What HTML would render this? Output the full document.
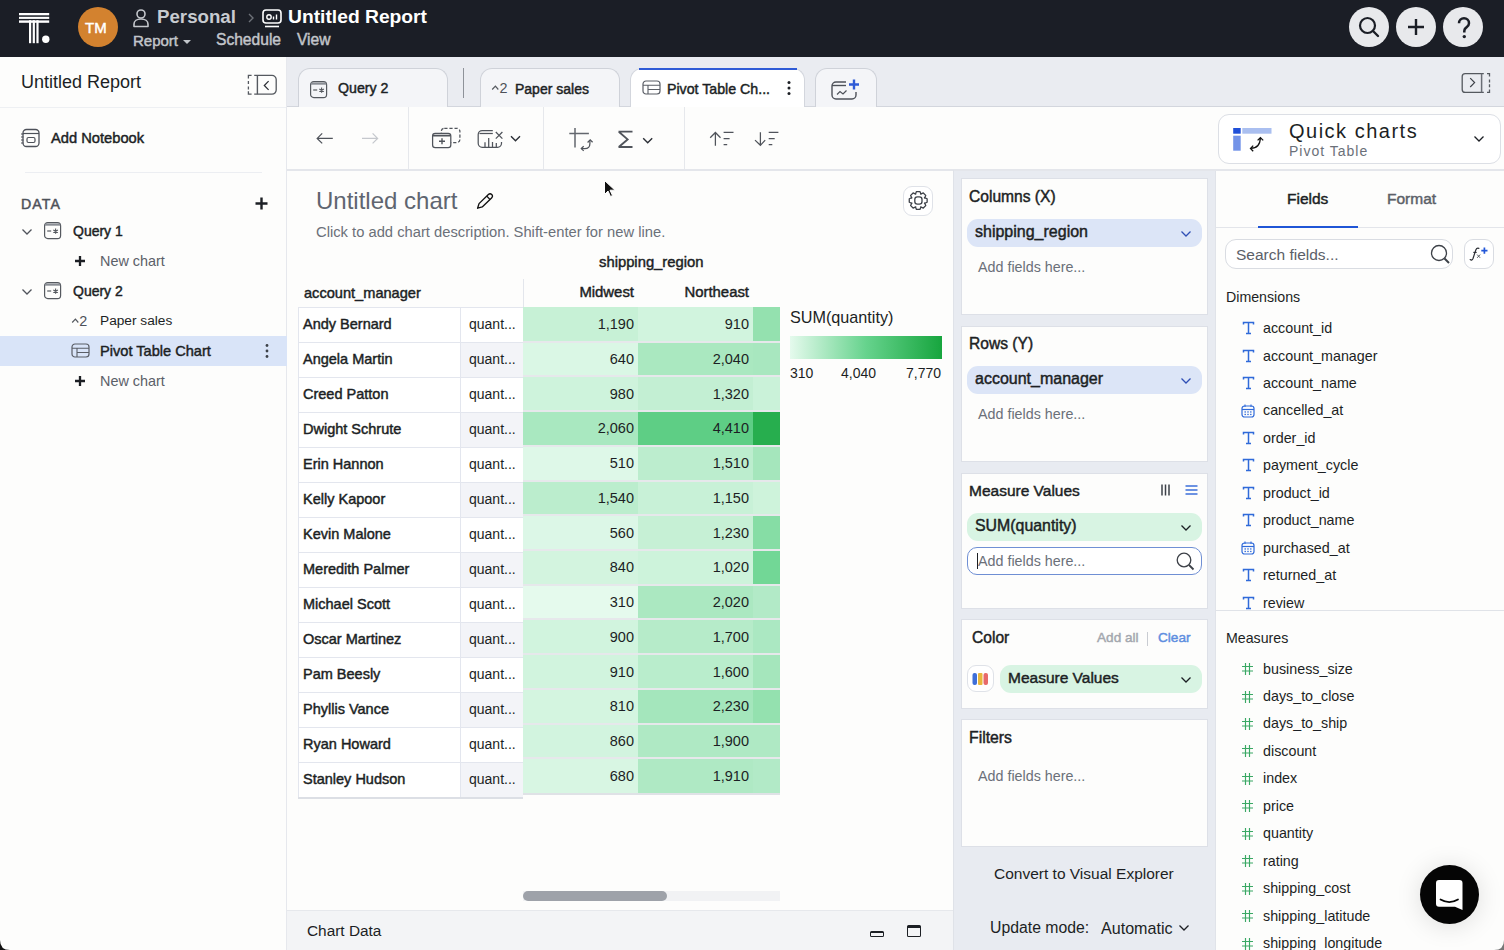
<!DOCTYPE html><html><head><meta charset="utf-8"><style>
*{box-sizing:border-box;margin:0;padding:0}
html,body{width:1504px;height:950px;overflow:hidden;background:#fdfdfc;font-family:"Liberation Sans",sans-serif}
.a{position:absolute}
.t{position:absolute;line-height:1;white-space:nowrap}
</style></head><body>
<div class="a" style="left:0px;top:0px;width:1504px;height:57px;background:#1b1e26"></div>
<svg class="a" style="left:17px;top:11px;" width="38" height="36" viewBox="0 0 38 36" fill="none"><g fill="#fff"><rect x="2" y="2" width="30.2" height="2.3"/><rect x="2" y="5.8" width="30.2" height="2.1"/><rect x="2" y="9.4" width="30.2" height="2.4"/>
<rect x="12" y="9.2" width="2.2" height="23"/><rect x="15.7" y="9.2" width="2.2" height="23"/><rect x="19.4" y="9.2" width="2.2" height="23"/><circle cx="28.8" cy="28.2" r="3.7"/></g></svg>
<div class="a" style="left:78px;top:7px;width:40px;height:40px;background:#d3822f;border-radius:50%"></div>
<div class="t " style="left:85px;top:20.10px;font-size:15px;font-weight:400;color:#fff;-webkit-text-stroke:0.45px #fff;">TM</div>
<svg class="a" style="left:132px;top:8px;" width="20" height="20" viewBox="0 0 20 20" fill="none"><circle cx="9" cy="6" r="4" stroke="#c4c7cc" stroke-width="1.6"/><path d="M2 18.5v-2.5c0-3 3-5 7-5s7 2 7 5v2.5z" stroke="#c4c7cc" stroke-width="1.6" stroke-linejoin="round"/></svg>
<div class="t " style="left:157px;top:7.57px;font-size:18.7px;font-weight:700;color:#c8cbd0;">Personal</div>
<svg class="a" style="left:246px;top:12px;" width="10" height="12" viewBox="0 0 10 12" fill="none"><path d="M3 2l4 4-4 4" stroke="#6d7178" stroke-width="1.4"/></svg>
<svg class="a" style="left:262px;top:9px;" width="21" height="19" viewBox="0 0 21 19" fill="none"><rect x="1" y="1" width="18" height="13" rx="3" stroke="#fff" stroke-width="1.6"/><circle cx="7" cy="8" r="2.2" stroke="#fff" stroke-width="1.4"/><path d="M11.5 10.5v-3M14.5 10.5v-5" stroke="#fff" stroke-width="1.4"/><path d="M3 17.5h14" stroke="#fff" stroke-width="1.6"/></svg>
<div class="t " style="left:288px;top:7.10px;font-size:19.25px;font-weight:700;color:#ffffff;">Untitled Report</div>
<div class="t " style="left:133px;top:32.60px;font-size:15px;font-weight:400;color:#c2c5ca;-webkit-text-stroke:0.45px #c2c5ca;">Report</div>
<svg class="a" style="left:182px;top:39px;" width="10" height="6" viewBox="0 0 10 6" fill="none"><path d="M1 1h8l-4 4z" fill="#c2c5ca"/></svg>
<div class="t " style="left:216px;top:32.49px;font-size:15.6px;font-weight:400;color:#c2c5ca;-webkit-text-stroke:0.45px #c2c5ca;">Schedule</div>
<div class="t " style="left:297px;top:32.49px;font-size:15.6px;font-weight:400;color:#c2c5ca;-webkit-text-stroke:0.45px #c2c5ca;">View</div>
<div class="a" style="left:1349px;top:7px;width:40px;height:40px;background:#e8e9ec;border-radius:50%"></div>
<div class="a" style="left:1396px;top:7px;width:40px;height:40px;background:#e8e9ec;border-radius:50%"></div>
<div class="a" style="left:1443px;top:7px;width:40px;height:40px;background:#e8e9ec;border-radius:50%"></div>
<svg class="a" style="left:1357px;top:15px;" width="24" height="24" viewBox="0 0 24 24" fill="none"><circle cx="10.5" cy="10.5" r="7.5" stroke="#1b1e26" stroke-width="2.2"/><path d="M16 16l5 5" stroke="#1b1e26" stroke-width="2.4" stroke-linecap="round"/></svg>
<svg class="a" style="left:1404px;top:15px;" width="24" height="24" viewBox="0 0 24 24" fill="none"><path d="M12 4v16M4 12h16" stroke="#1b1e26" stroke-width="2.4"/></svg>
<svg class="a" style="left:1455px;top:16px;" width="18" height="24" viewBox="0 0 18 24" fill="none"><path d="M4 7.2a5 5 0 0 1 10 0c0 2.8-2 3.6-3.3 4.8-.9.8-1.4 1.7-1.4 3.3v1.2" stroke="#1b1e26" stroke-width="2.5" fill="none"/><circle cx="9.3" cy="20.6" r="1.7" fill="#1b1e26"/></svg>
<!--SIDEBAR-->
<div class="a" style="left:0px;top:57px;width:287px;height:893px;background:#fdfdfc;border-right:1px solid #e6e8ed"></div>
<div class="a" style="left:0px;top:107px;width:286px;height:1px;background:#eef0f3"></div>
<div class="t " style="left:21px;top:72.76px;font-size:18px;font-weight:400;color:#1c1f24;">Untitled Report</div>
<svg class="a" style="left:0;top:0" width="300" height="100" viewBox="0 0 300 100" fill="none"><path d="M251.6 75.4h-3.2v3.2M248.4 81v3M248.4 86.4v3M248.4 91.2v3h3.2" stroke="#55595f" stroke-width="1.3"/><path d="M254.2 75.4H272a4.2 4.2 0 0 1 4.2 4.2v10.4a4.2 4.2 0 0 1-4.2 4.2H254.2" stroke="#55595f" stroke-width="1.3"/><path d="M257.4 75.4v18.8" stroke="#55595f" stroke-width="1.4"/><path d="M268.6 81.2l-4.3 4.3 4.3 4.3" stroke="#2a2d33" stroke-width="1.2"/></svg>
<svg class="a" style="left:20px;top:128px;" width="21" height="20" viewBox="0 0 21 20" fill="none"><rect x="3" y="1.5" width="16" height="17" rx="3.5" stroke="#4d5159" stroke-width="1.3"/><path d="M3 5.5h16" stroke="#4d5159" stroke-width="1.2"/><rect x="7" y="9.5" width="8" height="5" rx="1.5" stroke="#4d5159" stroke-width="1.2"/><path d="M1 6h2.5M1 9h2.5M1 12h2.5M1 15h2.5" stroke="#4d5159" stroke-width="1"/></svg>
<div class="t " style="left:51px;top:131.16px;font-size:14.7px;font-weight:400;color:#1c1f24;-webkit-text-stroke:0.45px #1c1f24;">Add Notebook</div>
<div class="a" style="left:25px;top:172px;width:237px;height:1px;background:#eceef2"></div>
<div class="t " style="left:21px;top:196.98px;font-size:14.2px;font-weight:400;color:#4d5159;-webkit-text-stroke:0.45px #4d5159;letter-spacing:1.1px">DATA</div>
<svg class="a" style="left:254px;top:196px;" width="15" height="15" viewBox="0 0 15 15" fill="none"><path d="M7.5 1.5v12M1.5 7.5h12" stroke="#1c1f24" stroke-width="2.4"/></svg>
<svg class="a" style="left:21px;top:228px;" width="12" height="8" viewBox="0 0 12 8" fill="none"><path d="M1.5 1.5l4.5 4.5 4.5-4.5" stroke="#50545c" stroke-width="1.3"/></svg>
<svg class="a" style="left:43px;top:221px;" width="19" height="19" viewBox="0 0 19 19" fill="none"><rect x="1.6" y="1.6" width="16" height="16" rx="3.2" stroke="#55595f" stroke-width="1.2"/><path d="M2 3.6h15.2" stroke="#8a8e95" stroke-width="2.2"/><path d="M4.2 10h4" stroke="#55595f" stroke-width="1.2"/><path d="M12.6 7.6v5.2M10.3 8.9l4.6 2.6M10.3 11.5l4.6-2.6" stroke="#55595f" stroke-width="1.1"/></svg>
<div class="t " style="left:73px;top:224.15px;font-size:14px;font-weight:400;color:#1c1f24;-webkit-text-stroke:0.45px #1c1f24;">Query 1</div>
<svg class="a" style="left:74px;top:255px;" width="12" height="12" viewBox="0 0 12 12" fill="none"><path d="M6 1v10M1 6h10" stroke="#1c1f24" stroke-width="2.3"/></svg>
<div class="t " style="left:100px;top:253.81px;font-size:14.4px;font-weight:400;color:#5b6068;">New chart</div>
<svg class="a" style="left:21px;top:288px;" width="12" height="8" viewBox="0 0 12 8" fill="none"><path d="M1.5 1.5l4.5 4.5 4.5-4.5" stroke="#50545c" stroke-width="1.3"/></svg>
<svg class="a" style="left:43px;top:281px;" width="19" height="19" viewBox="0 0 19 19" fill="none"><rect x="1.6" y="1.6" width="16" height="16" rx="3.2" stroke="#55595f" stroke-width="1.2"/><path d="M2 3.6h15.2" stroke="#8a8e95" stroke-width="2.2"/><path d="M4.2 10h4" stroke="#55595f" stroke-width="1.2"/><path d="M12.6 7.6v5.2M10.3 8.9l4.6 2.6M10.3 11.5l4.6-2.6" stroke="#55595f" stroke-width="1.1"/></svg>
<div class="t " style="left:73px;top:284.15px;font-size:14px;font-weight:400;color:#1c1f24;-webkit-text-stroke:0.45px #1c1f24;">Query 2</div>
<svg class="a" style="left:70px;top:316px;" width="10" height="10" viewBox="0 0 10 10" fill="none"><path d="M2.2 6.5L5.4 3.2 8.3 6.5" stroke="#55595f" stroke-width="1.2"/></svg>
<div class="t " style="left:79.2px;top:314.11px;font-size:14.4px;font-weight:400;color:#4d5159;">2</div>
<div class="t " style="left:100px;top:314.40px;font-size:13.7px;font-weight:400;color:#1c1f24;">Paper sales</div>
<div class="a" style="left:0px;top:336px;width:287px;height:30px;background:#d9e4f8"></div>
<svg class="a" style="left:71px;top:343px;" width="19" height="15" viewBox="0 0 19 15" fill="none"><rect x="1" y="1" width="17" height="13" rx="3" stroke="#5a5e66" stroke-width="1.2"/><path d="M1 5.3h17M6 5.3v8.7M6 9.5h12" stroke="#5a5e66" stroke-width="1.1"/></svg>
<div class="t " style="left:100px;top:343.64px;font-size:14.6px;font-weight:400;color:#1c1f24;-webkit-text-stroke:0.45px #1c1f24;">Pivot Table Chart</div>
<svg class="a" style="left:264px;top:343px;" width="6" height="16" viewBox="0 0 6 16" fill="none"><circle cx="3" cy="2.5" r="1.4" fill="#3d4148"/><circle cx="3" cy="8" r="1.4" fill="#3d4148"/><circle cx="3" cy="13.5" r="1.4" fill="#3d4148"/></svg>
<svg class="a" style="left:74px;top:375px;" width="12" height="12" viewBox="0 0 12 12" fill="none"><path d="M6 1v10M1 6h10" stroke="#1c1f24" stroke-width="2.3"/></svg>
<div class="t " style="left:100px;top:373.81px;font-size:14.4px;font-weight:400;color:#5b6068;">New chart</div>
<svg class="a" style="left:0px;top:940px;" width="10" height="10" viewBox="0 0 10 10" fill="none"><path d="M0 0 Q0 10 10 10 L0 10z" fill="#111"/></svg>
<!--TABS-->
<div class="a" style="left:287px;top:57px;width:1217px;height:50px;background:#eaecf1"></div>
<div class="a" style="left:287px;top:106px;width:1217px;height:1px;background:#d3d6dd"></div>
<div class="a" style="left:298px;top:68px;width:150px;height:39px;background:#f4f5f8;border:1px solid #cfd2d9;border-bottom:none;border-radius:12px 12px 0 0"></div>
<svg class="a" style="left:309px;top:80px;" width="19" height="19" viewBox="0 0 19 19" fill="none"><rect x="1.6" y="1.6" width="16" height="16" rx="3.2" stroke="#55595f" stroke-width="1.2"/><path d="M2 3.6h15.2" stroke="#8a8e95" stroke-width="2.2"/><path d="M4.2 10h4" stroke="#55595f" stroke-width="1.2"/><path d="M12.6 7.6v5.2M10.3 8.9l4.6 2.6M10.3 11.5l4.6-2.6" stroke="#55595f" stroke-width="1.1"/></svg>
<div class="t " style="left:338px;top:81.48px;font-size:14.2px;font-weight:400;color:#1c1f24;-webkit-text-stroke:0.45px #1c1f24;">Query 2</div>
<div class="a" style="left:463px;top:68px;width:1px;height:30px;background:#8e9299"></div>
<div class="a" style="left:480px;top:68px;width:140px;height:39px;background:#f4f5f8;border:1px solid #cfd2d9;border-bottom:none;border-radius:12px 12px 0 0"></div>
<svg class="a" style="left:490px;top:83px;" width="10" height="10" viewBox="0 0 10 10" fill="none"><path d="M2.2 6.5L5.4 3.2 8.3 6.5" stroke="#55595f" stroke-width="1.2"/></svg>
<div class="t " style="left:499.4px;top:81.31px;font-size:14.4px;font-weight:400;color:#4d5159;">2</div>
<div class="t " style="left:515px;top:81.65px;font-size:14px;font-weight:400;color:#1c1f24;-webkit-text-stroke:0.45px #1c1f24;">Paper sales</div>
<div class="a" style="left:630px;top:68px;width:175px;height:40px;background:#fff;border:1px solid #d3d6dd;border-bottom:none;border-radius:12px 12px 0 0"></div>
<div class="a" style="left:639px;top:68px;width:158px;height:2px;background:#2f5bd6"></div>
<svg class="a" style="left:642px;top:80px;" width="19" height="15" viewBox="0 0 19 15" fill="none"><rect x="1" y="1" width="17" height="13" rx="3" stroke="#5a5e66" stroke-width="1.2"/><path d="M1 5.3h17M6 5.3v8.7M6 9.5h12" stroke="#5a5e66" stroke-width="1.1"/></svg>
<div class="t " style="left:667px;top:81.58px;font-size:14.2px;font-weight:400;color:#1c1f24;-webkit-text-stroke:0.45px #1c1f24;">Pivot Table Ch...</div>
<svg class="a" style="left:786px;top:80px;" width="6" height="16" viewBox="0 0 6 16" fill="none"><circle cx="3" cy="2.5" r="1.5" fill="#1c1f24"/><circle cx="3" cy="8" r="1.5" fill="#1c1f24"/><circle cx="3" cy="13.5" r="1.5" fill="#1c1f24"/></svg>
<div class="a" style="left:815px;top:68px;width:62px;height:39px;background:#f4f5f8;border:1px solid #cfd2d9;border-bottom:none;border-radius:12px 12px 0 0"></div>
<svg class="a" style="left:830px;top:78px;" width="32" height="22" viewBox="0 0 32 22" fill="none"><path d="M16 4H6a4 4 0 0 0-4 4v9a4 4 0 0 0 4 4h16a4 4 0 0 0 4-4v-3" stroke="#4d5159" stroke-width="1.4"/><path d="M2 7.5h14" stroke="#4d5159" stroke-width="1.4"/><path d="M7 16.5l3-3 3 2.5 3.5-3.5" stroke="#4d5159" stroke-width="1.2"/><path d="M24 1.5v10M19 6.5h10" stroke="#2f5bd6" stroke-width="2.4"/></svg>
<svg class="a" style="left:1440px;top:60px" width="64" height="45" viewBox="1440 60 64 45" fill="none"><path d="M1483.8 73.6H1465.2a3 3 0 0 0-3 3v12.8a3 3 0 0 0 3 3h18.6" stroke="#55595f" stroke-width="1.3"/><path d="M1481.6 73.6v18.8" stroke="#6a6e75" stroke-width="1.5"/><path d="M1487 73.6h2.5v2.8M1489.5 79.6v3M1489.5 84.2v3M1489.5 89.4v3h-2.5" stroke="#55595f" stroke-width="1.3"/><path d="M1470.2 78.2l4.4 4.4-4.4 4.4" stroke="#3d4148" stroke-width="1.2"/></svg>
<div class="a" style="left:287px;top:107px;width:1217px;height:62px;background:#fdfdfc"></div>
<div class="a" style="left:287px;top:169px;width:1217px;height:1.5px;background:#e4e6eb"></div>
<div class="a" style="left:408px;top:107px;width:1px;height:62px;background:#e6e8ec"></div>
<div class="a" style="left:543px;top:107px;width:1px;height:62px;background:#e6e8ec"></div>
<div class="a" style="left:684px;top:107px;width:1px;height:62px;background:#e6e8ec"></div>
<svg class="a" style="left:0;top:0" width="1504" height="170" viewBox="0 0 1504 170" fill="none">
<path d="M332.8 138.4H317.2M322.2 133.4l-5 5 5 5" stroke="#50545b" stroke-width="1.25"/>
<path d="M362 138.4h15.6M372.6 133.4l5 5-5 5" stroke="#c5c8cd" stroke-width="1.25"/>
<rect x="441.3" y="128.3" width="18.6" height="14.3" rx="3" stroke="#50545b" stroke-width="1.25" stroke-dasharray="3.2 1.9"/>
<rect x="432.6" y="133.3" width="18.2" height="14.3" rx="2.6" fill="#fdfdfc" stroke="#50545b" stroke-width="1.25"/>
<path d="M433 135.6h17.4" stroke="#50545b" stroke-width="1.8"/>
<path d="M442 138.2v6M439 141.2h6" stroke="#50545b" stroke-width="1.4"/>
<path d="M492.8 130.6H482.2a4 4 0 0 0-4 4v8.7a4 4 0 0 0 4 4H497.5a4 4 0 0 0 4-4V142" stroke="#50545b" stroke-width="1.25"/>
<path d="M479.5 133.5H492.8" stroke="#50545b" stroke-width="1.25"/>
<path d="M485 147V142.3M488.7 147V138M492.5 147V142M496.3 147V143" stroke="#50545b" stroke-width="1.25"/>
<path d="M495.8 132l6.6 6.6M502.4 132l-6.6 6.6" stroke="#50545b" stroke-width="1.25"/>
<path d="M511 136.2l4.5 4.5 4.5-4.5" stroke="#2b2f36" stroke-width="1.4"/>
<path d="M575 128v19.6M569.3 133.5h19.6" stroke="#63676e" stroke-width="1.5"/>
<path d="M581.5 148.6h3.2q5.2 0 5.2-5.2V140" stroke="#50545b" stroke-width="1.25"/>
<path d="M587.6 142.5l2.6-2.6 2.4 2.4M583.7 146.2l-2.4 2.4 2.4 2.3" stroke="#50545b" stroke-width="1.25"/>
<path d="M618.5 131.6h14M618.8 131.8l8.8 7.6-8.8 7.6M618.5 147h14" stroke="#50545b" stroke-width="1.9"/>
<path d="M643.2 138.3l4.5 4.5 4.5-4.5" stroke="#2b2f36" stroke-width="1.4"/>
<path d="M715.4 145.7V132.5M710.2 137.7l5.2-5.2 5.1 5.2M723.6 132.4h9.9M723.6 138.6h6M723.6 144.7h3.6" stroke="#50545b" stroke-width="1.25"/>
<path d="M760.4 132.3V145.5M755 140.1l5.4 5.2 4.8-5.2M768.7 132.4h9.7M768.7 138.6h6M768.7 144.7h3.6" stroke="#50545b" stroke-width="1.25"/>
</svg>
<!--QUICK-->
<div class="a" style="left:1218px;top:114px;width:283px;height:50px;background:#fff;border:1px solid #dcdfe5;border-radius:11px"></div>
<svg class="a" style="left:1225px;top:118px;" width="60" height="42" viewBox="0 0 60 42" fill="none"><rect x="8.2" y="10" width="7.5" height="5.7" fill="#1f4fd8"/><rect x="17.3" y="10" width="29.2" height="5.7" fill="#aabff0"/><rect x="8.2" y="17.7" width="7.5" height="15" fill="#7393e8"/><path d="M25.6 30.4Q35 30.5 35.4 19.8M32.6 22.4L35.4 19.6L38.2 22.4M28.2 27.6L25.5 30.4L28.2 33.2" stroke="#111" stroke-width="1.3" fill="none"/></svg>
<div class="t " style="left:1289px;top:120.57px;font-size:20px;font-weight:400;color:#1c1f24;letter-spacing:1.5px">Quick charts</div>
<div class="t " style="left:1289px;top:143.65px;font-size:14px;font-weight:400;color:#6b7079;letter-spacing:1px">Pivot Table</div>
<svg class="a" style="left:1473px;top:135px;" width="12" height="8" viewBox="0 0 12 8" fill="none"><path d="M1.5 1.5l4.5 4.5 4.5-4.5" stroke="#1c1f24" stroke-width="1.3"/></svg>
<div class="a" style="left:287px;top:170.5px;width:667px;height:740px;background:#fdfdfc"></div>
<div class="a" style="left:953px;top:170px;width:1px;height:780px;background:#dfe2e8"></div>
<div class="t " style="left:316px;top:189.08px;font-size:24px;font-weight:400;color:#5f6570;">Untitled chart</div>
<svg class="a" style="left:470px;top:188px" width="30" height="26" viewBox="470 188 30 26" fill="none"><g transform="translate(477.6 208.2) rotate(-44)"><path d="M0 0L4.2-2.3H17.2Q19.6-2.3 19.6 0Q19.6 2.3 17.2 2.3H4.2Z" stroke="#111" stroke-width="1.35" stroke-linejoin="round"/><path d="M15 -2.3V2.3" stroke="#111" stroke-width="1.3"/></g></svg>
<div class="t " style="left:316px;top:224.81px;font-size:14.75px;font-weight:400;color:#6b7079;">Click to add chart description. Shift-enter for new line.</div>
<div class="a" style="left:903px;top:186px;width:30px;height:30px;background:#fff;border:1px solid #dfe2e8;border-radius:9px"></div>
<svg class="a" style="left:890px;top:180px" width="50" height="40" viewBox="890 180 50 40" fill="none"><path d="M915.39 194.20 L916.46 191.57 L919.94 191.57 L921.01 194.20 L920.67 194.06 L923.29 192.96 L925.74 195.41 L924.64 198.03 L924.50 197.69 L927.13 198.76 L927.13 202.24 L924.50 203.31 L924.64 202.97 L925.74 205.59 L923.29 208.04 L920.67 206.94 L921.01 206.80 L919.94 209.43 L916.46 209.43 L915.39 206.80 L915.73 206.94 L913.11 208.04 L910.66 205.59 L911.76 202.97 L911.90 203.31 L909.27 202.24 L909.27 198.76 L911.90 197.69 L911.76 198.03 L910.66 195.41 L913.11 192.96 L915.73 194.06Z" stroke="#3d4148" stroke-width="1.3" stroke-linejoin="round"/><rect x="914.8" y="196.9" width="7.2" height="7.2" rx="2.6" stroke="#3d4148" stroke-width="1.3"/></svg>
<svg class="a" style="left:603px;top:179px;" width="14" height="20" viewBox="0 0 14 20" fill="none"><path d="M1.5 1.5v14l3.5-3.5 2.5 5.5 2-1-2.5-5.3h5z" fill="#111" stroke="#fff" stroke-width="1"/></svg>
<div class="t " style="left:599px;top:255.47px;font-size:14.8px;font-weight:400;color:#1c1f24;-webkit-text-stroke:0.45px #1c1f24;">shipping_region</div>
<div class="t " style="left:304px;top:285.64px;font-size:14.6px;font-weight:400;color:#1c1f24;-webkit-text-stroke:0.45px #1c1f24;">account_manager</div>
<div class="a" style="left:523px;top:279px;width:1px;height:28px;background:#e3e6ec"></div>
<div class="t " style="right:870px;top:285.39px;font-size:14.9px;font-weight:400;color:#1c1f24;-webkit-text-stroke:0.45px #1c1f24;">Midwest</div>
<div class="t " style="right:755px;top:285.39px;font-size:14.9px;font-weight:400;color:#1c1f24;-webkit-text-stroke:0.45px #1c1f24;">Northeast</div>
<!--TABLE-->
<div class="a" style="left:298px;top:307px;width:225px;height:491px;background:#fff;border-left:1px solid #e3e6ee"></div>
<div class="a" style="left:523px;top:307.0px;width:115px;height:34.72px;background:#c7f1d6"></div>
<div class="a" style="left:638px;top:307.0px;width:115px;height:34.72px;background:#d1f4de"></div>
<div class="a" style="left:753px;top:307.0px;width:27px;height:34.72px;background:#94e1af"></div>
<div class="a" style="left:298px;top:307px;width:225px;height:1px;background:#e3e6ee"></div>
<div class="t " style="left:303px;top:316.73px;font-size:14.5px;font-weight:400;color:#1c1f24;-webkit-text-stroke:0.45px #1c1f24;">Andy Bernard</div>
<div class="t " style="left:469px;top:316.55px;font-size:14px;font-weight:400;color:#1c1f24;">quant...</div>
<div class="t " style="right:870px;top:317.33px;font-size:14.5px;font-weight:400;color:#1c1f24;">1,190</div>
<div class="t " style="right:755px;top:317.33px;font-size:14.5px;font-weight:400;color:#1c1f24;">910</div>
<div class="a" style="left:461px;top:342px;width:62px;height:35px;background:#f3f4f8"></div>
<div class="a" style="left:523px;top:341.72px;width:115px;height:34.72px;background:#daf7e5"></div>
<div class="a" style="left:638px;top:341.72px;width:115px;height:34.72px;background:#aae8c0"></div>
<div class="a" style="left:753px;top:341.72px;width:27px;height:34.72px;background:#a8e7bf"></div>
<div class="a" style="left:298px;top:342px;width:225px;height:1px;background:#e3e6ee"></div>
<div class="a" style="left:523px;top:340.72px;width:257px;height:2px;background:#e6e8eb"></div>
<div class="t " style="left:303px;top:351.73px;font-size:14.5px;font-weight:400;color:#1c1f24;-webkit-text-stroke:0.45px #1c1f24;">Angela Martin</div>
<div class="t " style="left:469px;top:351.55px;font-size:14px;font-weight:400;color:#1c1f24;">quant...</div>
<div class="t " style="right:870px;top:352.05px;font-size:14.5px;font-weight:400;color:#1c1f24;">640</div>
<div class="t " style="right:755px;top:352.05px;font-size:14.5px;font-weight:400;color:#1c1f24;">2,040</div>
<div class="a" style="left:523px;top:376.44px;width:115px;height:34.72px;background:#cef3dc"></div>
<div class="a" style="left:638px;top:376.44px;width:115px;height:34.72px;background:#c3efd3"></div>
<div class="a" style="left:753px;top:376.44px;width:27px;height:34.72px;background:#caf2d9"></div>
<div class="a" style="left:298px;top:377px;width:225px;height:1px;background:#e3e6ee"></div>
<div class="a" style="left:523px;top:375.44px;width:257px;height:2px;background:#e6e8eb"></div>
<div class="t " style="left:303px;top:386.73px;font-size:14.5px;font-weight:400;color:#1c1f24;-webkit-text-stroke:0.45px #1c1f24;">Creed Patton</div>
<div class="t " style="left:469px;top:386.55px;font-size:14px;font-weight:400;color:#1c1f24;">quant...</div>
<div class="t " style="right:870px;top:386.77px;font-size:14.5px;font-weight:400;color:#1c1f24;">980</div>
<div class="t " style="right:755px;top:386.77px;font-size:14.5px;font-weight:400;color:#1c1f24;">1,320</div>
<div class="a" style="left:461px;top:412px;width:62px;height:35px;background:#f3f4f8"></div>
<div class="a" style="left:523px;top:411.16px;width:115px;height:34.72px;background:#a9e8c0"></div>
<div class="a" style="left:638px;top:411.16px;width:115px;height:34.72px;background:#5ece85"></div>
<div class="a" style="left:753px;top:411.16px;width:27px;height:34.72px;background:#27ae4e"></div>
<div class="a" style="left:298px;top:412px;width:225px;height:1px;background:#e3e6ee"></div>
<div class="a" style="left:523px;top:410.16px;width:257px;height:2px;background:#e6e8eb"></div>
<div class="t " style="left:303px;top:421.73px;font-size:14.5px;font-weight:400;color:#1c1f24;-webkit-text-stroke:0.45px #1c1f24;">Dwight Schrute</div>
<div class="t " style="left:469px;top:421.55px;font-size:14px;font-weight:400;color:#1c1f24;">quant...</div>
<div class="t " style="right:870px;top:421.49px;font-size:14.5px;font-weight:400;color:#1c1f24;">2,060</div>
<div class="t " style="right:755px;top:421.49px;font-size:14.5px;font-weight:400;color:#1c1f24;">4,410</div>
<div class="a" style="left:523px;top:445.88px;width:115px;height:34.72px;background:#def8e8"></div>
<div class="a" style="left:638px;top:445.88px;width:115px;height:34.72px;background:#bcedce"></div>
<div class="a" style="left:753px;top:445.88px;width:27px;height:34.72px;background:#a5e6bc"></div>
<div class="a" style="left:298px;top:447px;width:225px;height:1px;background:#e3e6ee"></div>
<div class="a" style="left:523px;top:444.88px;width:257px;height:2px;background:#e6e8eb"></div>
<div class="t " style="left:303px;top:456.73px;font-size:14.5px;font-weight:400;color:#1c1f24;-webkit-text-stroke:0.45px #1c1f24;">Erin Hannon</div>
<div class="t " style="left:469px;top:456.55px;font-size:14px;font-weight:400;color:#1c1f24;">quant...</div>
<div class="t " style="right:870px;top:456.21px;font-size:14.5px;font-weight:400;color:#1c1f24;">510</div>
<div class="t " style="right:755px;top:456.21px;font-size:14.5px;font-weight:400;color:#1c1f24;">1,510</div>
<div class="a" style="left:461px;top:482px;width:62px;height:35px;background:#f3f4f8"></div>
<div class="a" style="left:523px;top:480.6px;width:115px;height:34.72px;background:#bbedcd"></div>
<div class="a" style="left:638px;top:480.6px;width:115px;height:34.72px;background:#c8f1d7"></div>
<div class="a" style="left:753px;top:480.6px;width:27px;height:34.72px;background:#cef3db"></div>
<div class="a" style="left:298px;top:482px;width:225px;height:1px;background:#e3e6ee"></div>
<div class="a" style="left:523px;top:479.6px;width:257px;height:2px;background:#e6e8eb"></div>
<div class="t " style="left:303px;top:491.73px;font-size:14.5px;font-weight:400;color:#1c1f24;-webkit-text-stroke:0.45px #1c1f24;">Kelly Kapoor</div>
<div class="t " style="left:469px;top:491.55px;font-size:14px;font-weight:400;color:#1c1f24;">quant...</div>
<div class="t " style="right:870px;top:490.93px;font-size:14.5px;font-weight:400;color:#1c1f24;">1,540</div>
<div class="t " style="right:755px;top:490.93px;font-size:14.5px;font-weight:400;color:#1c1f24;">1,150</div>
<div class="a" style="left:523px;top:515.32px;width:115px;height:34.72px;background:#dcf7e7"></div>
<div class="a" style="left:638px;top:515.32px;width:115px;height:34.72px;background:#c6f0d5"></div>
<div class="a" style="left:753px;top:515.32px;width:27px;height:34.72px;background:#86dda5"></div>
<div class="a" style="left:298px;top:517px;width:225px;height:1px;background:#e3e6ee"></div>
<div class="a" style="left:523px;top:514.32px;width:257px;height:2px;background:#e6e8eb"></div>
<div class="t " style="left:303px;top:526.73px;font-size:14.5px;font-weight:400;color:#1c1f24;-webkit-text-stroke:0.45px #1c1f24;">Kevin Malone</div>
<div class="t " style="left:469px;top:526.55px;font-size:14px;font-weight:400;color:#1c1f24;">quant...</div>
<div class="t " style="right:870px;top:525.65px;font-size:14.5px;font-weight:400;color:#1c1f24;">560</div>
<div class="t " style="right:755px;top:525.65px;font-size:14.5px;font-weight:400;color:#1c1f24;">1,230</div>
<div class="a" style="left:461px;top:552px;width:62px;height:35px;background:#f3f4f8"></div>
<div class="a" style="left:523px;top:550.04px;width:115px;height:34.72px;background:#d3f4df"></div>
<div class="a" style="left:638px;top:550.04px;width:115px;height:34.72px;background:#cdf3db"></div>
<div class="a" style="left:753px;top:550.04px;width:27px;height:34.72px;background:#72d796"></div>
<div class="a" style="left:298px;top:552px;width:225px;height:1px;background:#e3e6ee"></div>
<div class="a" style="left:523px;top:549.04px;width:257px;height:2px;background:#e6e8eb"></div>
<div class="t " style="left:303px;top:561.73px;font-size:14.5px;font-weight:400;color:#1c1f24;-webkit-text-stroke:0.45px #1c1f24;">Meredith Palmer</div>
<div class="t " style="left:469px;top:561.55px;font-size:14px;font-weight:400;color:#1c1f24;">quant...</div>
<div class="t " style="right:870px;top:560.37px;font-size:14.5px;font-weight:400;color:#1c1f24;">840</div>
<div class="t " style="right:755px;top:560.37px;font-size:14.5px;font-weight:400;color:#1c1f24;">1,020</div>
<div class="a" style="left:523px;top:584.76px;width:115px;height:34.72px;background:#e5faed"></div>
<div class="a" style="left:638px;top:584.76px;width:115px;height:34.72px;background:#abe8c1"></div>
<div class="a" style="left:753px;top:584.76px;width:27px;height:34.72px;background:#b2eac7"></div>
<div class="a" style="left:298px;top:587px;width:225px;height:1px;background:#e3e6ee"></div>
<div class="a" style="left:523px;top:583.76px;width:257px;height:2px;background:#e6e8eb"></div>
<div class="t " style="left:303px;top:596.73px;font-size:14.5px;font-weight:400;color:#1c1f24;-webkit-text-stroke:0.45px #1c1f24;">Michael Scott</div>
<div class="t " style="left:469px;top:596.55px;font-size:14px;font-weight:400;color:#1c1f24;">quant...</div>
<div class="t " style="right:870px;top:595.09px;font-size:14.5px;font-weight:400;color:#1c1f24;">310</div>
<div class="t " style="right:755px;top:595.09px;font-size:14.5px;font-weight:400;color:#1c1f24;">2,020</div>
<div class="a" style="left:461px;top:622px;width:62px;height:35px;background:#f3f4f8"></div>
<div class="a" style="left:523px;top:619.48px;width:115px;height:34.72px;background:#d1f4de"></div>
<div class="a" style="left:638px;top:619.48px;width:115px;height:34.72px;background:#b6ebc9"></div>
<div class="a" style="left:753px;top:619.48px;width:27px;height:34.72px;background:#abe8c2"></div>
<div class="a" style="left:298px;top:622px;width:225px;height:1px;background:#e3e6ee"></div>
<div class="a" style="left:523px;top:618.48px;width:257px;height:2px;background:#e6e8eb"></div>
<div class="t " style="left:303px;top:631.73px;font-size:14.5px;font-weight:400;color:#1c1f24;-webkit-text-stroke:0.45px #1c1f24;">Oscar Martinez</div>
<div class="t " style="left:469px;top:631.55px;font-size:14px;font-weight:400;color:#1c1f24;">quant...</div>
<div class="t " style="right:870px;top:629.81px;font-size:14.5px;font-weight:400;color:#1c1f24;">900</div>
<div class="t " style="right:755px;top:629.81px;font-size:14.5px;font-weight:400;color:#1c1f24;">1,700</div>
<div class="a" style="left:523px;top:654.2px;width:115px;height:34.72px;background:#d1f4de"></div>
<div class="a" style="left:638px;top:654.2px;width:115px;height:34.72px;background:#b9edcc"></div>
<div class="a" style="left:753px;top:654.2px;width:27px;height:34.72px;background:#a5e6bc"></div>
<div class="a" style="left:298px;top:657px;width:225px;height:1px;background:#e3e6ee"></div>
<div class="a" style="left:523px;top:653.2px;width:257px;height:2px;background:#e6e8eb"></div>
<div class="t " style="left:303px;top:666.73px;font-size:14.5px;font-weight:400;color:#1c1f24;-webkit-text-stroke:0.45px #1c1f24;">Pam Beesly</div>
<div class="t " style="left:469px;top:666.55px;font-size:14px;font-weight:400;color:#1c1f24;">quant...</div>
<div class="t " style="right:870px;top:664.53px;font-size:14.5px;font-weight:400;color:#1c1f24;">910</div>
<div class="t " style="right:755px;top:664.53px;font-size:14.5px;font-weight:400;color:#1c1f24;">1,600</div>
<div class="a" style="left:461px;top:692px;width:62px;height:35px;background:#f3f4f8"></div>
<div class="a" style="left:523px;top:688.92px;width:115px;height:34.72px;background:#d4f5e0"></div>
<div class="a" style="left:638px;top:688.92px;width:115px;height:34.72px;background:#a4e6bc"></div>
<div class="a" style="left:753px;top:688.92px;width:27px;height:34.72px;background:#94e1af"></div>
<div class="a" style="left:298px;top:692px;width:225px;height:1px;background:#e3e6ee"></div>
<div class="a" style="left:523px;top:687.92px;width:257px;height:2px;background:#e6e8eb"></div>
<div class="t " style="left:303px;top:701.73px;font-size:14.5px;font-weight:400;color:#1c1f24;-webkit-text-stroke:0.45px #1c1f24;">Phyllis Vance</div>
<div class="t " style="left:469px;top:701.55px;font-size:14px;font-weight:400;color:#1c1f24;">quant...</div>
<div class="t " style="right:870px;top:699.25px;font-size:14.5px;font-weight:400;color:#1c1f24;">810</div>
<div class="t " style="right:755px;top:699.25px;font-size:14.5px;font-weight:400;color:#1c1f24;">2,230</div>
<div class="a" style="left:523px;top:723.64px;width:115px;height:34.72px;background:#d2f4df"></div>
<div class="a" style="left:638px;top:723.64px;width:115px;height:34.72px;background:#afe9c4"></div>
<div class="a" style="left:753px;top:723.64px;width:27px;height:34.72px;background:#afe9c4"></div>
<div class="a" style="left:298px;top:727px;width:225px;height:1px;background:#e3e6ee"></div>
<div class="a" style="left:523px;top:722.64px;width:257px;height:2px;background:#e6e8eb"></div>
<div class="t " style="left:303px;top:736.73px;font-size:14.5px;font-weight:400;color:#1c1f24;-webkit-text-stroke:0.45px #1c1f24;">Ryan Howard</div>
<div class="t " style="left:469px;top:736.55px;font-size:14px;font-weight:400;color:#1c1f24;">quant...</div>
<div class="t " style="right:870px;top:733.97px;font-size:14.5px;font-weight:400;color:#1c1f24;">860</div>
<div class="t " style="right:755px;top:733.97px;font-size:14.5px;font-weight:400;color:#1c1f24;">1,900</div>
<div class="a" style="left:461px;top:762px;width:62px;height:35px;background:#f3f4f8"></div>
<div class="a" style="left:523px;top:758.36px;width:115px;height:34.72px;background:#d8f6e3"></div>
<div class="a" style="left:638px;top:758.36px;width:115px;height:34.72px;background:#afe9c4"></div>
<div class="a" style="left:753px;top:758.36px;width:27px;height:34.72px;background:#b2eac7"></div>
<div class="a" style="left:298px;top:762px;width:225px;height:1px;background:#e3e6ee"></div>
<div class="a" style="left:523px;top:757.36px;width:257px;height:2px;background:#e6e8eb"></div>
<div class="t " style="left:303px;top:771.73px;font-size:14.5px;font-weight:400;color:#1c1f24;-webkit-text-stroke:0.45px #1c1f24;">Stanley Hudson</div>
<div class="t " style="left:469px;top:771.55px;font-size:14px;font-weight:400;color:#1c1f24;">quant...</div>
<div class="t " style="right:870px;top:768.69px;font-size:14.5px;font-weight:400;color:#1c1f24;">680</div>
<div class="t " style="right:755px;top:768.69px;font-size:14.5px;font-weight:400;color:#1c1f24;">1,910</div>
<div class="a" style="left:460px;top:307px;width:1px;height:491px;background:#e3e6ee"></div>
<div class="a" style="left:298px;top:797px;width:225px;height:1.5px;background:#dcdfe5"></div>
<div class="a" style="left:523px;top:793px;width:257px;height:2px;background:#dfe2e6"></div>
<div class="t " style="left:790px;top:309.29px;font-size:16.2px;font-weight:400;color:#1c1f24;">SUM(quantity)</div>
<div class="a" style="left:790px;top:336px;width:152px;height:23px;background:linear-gradient(90deg,#e5faed,#66d38d,#17a53e)"></div>
<div class="t " style="left:790px;top:365.65px;font-size:14px;font-weight:400;color:#1c1f24;">310</div>
<div class="t " style="left:841px;top:365.65px;font-size:14px;font-weight:400;color:#1c1f24;">4,040</div>
<div class="t " style="right:563px;top:365.65px;font-size:14px;font-weight:400;color:#1c1f24;">7,770</div>
<div class="a" style="left:523px;top:891px;width:257px;height:10px;background:#f1f2f4"></div>
<div class="a" style="left:523px;top:891px;width:144px;height:10px;background:#9ea2a9;border-radius:5px"></div>
<div class="a" style="left:287px;top:910px;width:666px;height:40px;background:#f3f4f6;border-top:1px solid #e6e8ec"></div>
<div class="t " style="left:307px;top:922.96px;font-size:15.4px;font-weight:400;color:#1c1f24;">Chart Data</div>
<div class="a" style="left:870px;top:931px;width:14px;height:6px;border:1.6px solid #1c1f24;border-radius:1.5px;border-top-width:2.6px"></div>
<div class="a" style="left:907px;top:925px;width:14px;height:12px;border:1.5px solid #1c1f24;border-top-width:3px;border-radius:1.5px"></div>
<!--CONFIG-->
<div class="a" style="left:954px;top:170.5px;width:261px;height:780px;background:#e8ebf1"></div>
<div class="a" style="left:961px;top:178px;width:247px;height:137px;background:#fdfdfc;border:1px solid #dde0e7"></div>
<div class="a" style="left:961px;top:326px;width:247px;height:136px;background:#fdfdfc;border:1px solid #dde0e7"></div>
<div class="a" style="left:961px;top:473px;width:247px;height:136px;background:#fdfdfc;border:1px solid #dde0e7"></div>
<div class="a" style="left:961px;top:619px;width:247px;height:90px;background:#fdfdfc;border:1px solid #dde0e7"></div>
<div class="a" style="left:961px;top:719px;width:247px;height:128px;background:#fdfdfc;border:1px solid #dde0e7"></div>
<div class="t " style="left:969px;top:189.09px;font-size:15.6px;font-weight:400;color:#1c1f24;-webkit-text-stroke:0.45px #1c1f24;">Columns (X)</div>
<div class="a" style="left:967px;top:219px;width:235px;height:28px;background:#dce5f7;border-radius:11px"></div>
<div class="t " style="left:975px;top:223.86px;font-size:16px;font-weight:400;color:#1c1f24;-webkit-text-stroke:0.45px #1c1f24;">shipping_region</div>
<svg class="a" style="left:1180px;top:230px;" width="12" height="8" viewBox="0 0 12 8" fill="none"><path d="M1.5 1.5l4.5 4.5 4.5-4.5" stroke="#2f4fb5" stroke-width="1.3"/></svg>
<div class="t " style="left:978px;top:259.60px;font-size:14.3px;font-weight:400;color:#6b7079;">Add fields here...</div>
<div class="t " style="left:969px;top:336.29px;font-size:15.6px;font-weight:400;color:#1c1f24;-webkit-text-stroke:0.45px #1c1f24;">Rows (Y)</div>
<div class="a" style="left:967px;top:366px;width:235px;height:28px;background:#dce5f7;border-radius:11px"></div>
<div class="t " style="left:975px;top:370.86px;font-size:16px;font-weight:400;color:#1c1f24;-webkit-text-stroke:0.45px #1c1f24;">account_manager</div>
<svg class="a" style="left:1180px;top:377px;" width="12" height="8" viewBox="0 0 12 8" fill="none"><path d="M1.5 1.5l4.5 4.5 4.5-4.5" stroke="#2f4fb5" stroke-width="1.3"/></svg>
<div class="t " style="left:978px;top:406.90px;font-size:14.3px;font-weight:400;color:#6b7079;">Add fields here...</div>
<div class="t " style="left:969px;top:482.88px;font-size:15.5px;font-weight:400;color:#1c1f24;-webkit-text-stroke:0.45px #1c1f24;">Measure Values</div>
<svg class="a" style="left:1160px;top:483px;" width="14" height="14" viewBox="0 0 14 14" fill="none"><path d="M2 1.5v11M5.5 1.5v11M9 1.5v11" stroke="#3d4148" stroke-width="1.5"/></svg>
<svg class="a" style="left:1184px;top:483px;" width="15" height="14" viewBox="0 0 15 14" fill="none"><path d="M1.5 3h12M1.5 7h12M1.5 11h12" stroke="#3d6fd9" stroke-width="1.6"/></svg>
<div class="a" style="left:967px;top:513px;width:235px;height:28px;background:#d8f4e3;border-radius:11px"></div>
<div class="t " style="left:975px;top:517.94px;font-size:15.9px;font-weight:400;color:#1c1f24;-webkit-text-stroke:0.45px #1c1f24;">SUM(quantity)</div>
<svg class="a" style="left:1180px;top:524px;" width="12" height="8" viewBox="0 0 12 8" fill="none"><path d="M1.5 1.5l4.5 4.5 4.5-4.5" stroke="#1c1f24" stroke-width="1.3"/></svg>
<div class="a" style="left:967px;top:547px;width:235px;height:28px;background:#fff;border:1.2px solid #6f8fd4;border-radius:10px"></div>
<div class="a" style="left:977px;top:553px;width:1px;height:16px;background:#1c1f24"></div>
<div class="t " style="left:978px;top:553.90px;font-size:14.3px;font-weight:400;color:#6b7079;">Add fields here...</div>
<svg class="a" style="left:1175px;top:551px;" width="21" height="21" viewBox="0 0 21 21" fill="none"><circle cx="9" cy="9" r="6.8" stroke="#3d4148" stroke-width="1.3"/><path d="M14 14l4.5 4.5" stroke="#3d4148" stroke-width="1.8"/></svg>
<div class="t " style="left:972px;top:629.79px;font-size:15.6px;font-weight:400;color:#1c1f24;-webkit-text-stroke:0.45px #1c1f24;">Color</div>
<div class="t " style="left:1097px;top:631.49px;font-size:13.6px;font-weight:400;color:#a3a7ae;-webkit-text-stroke:0.45px #a3a7ae;">Add all</div>
<div class="a" style="left:1147px;top:632px;width:1px;height:14px;background:#c9ccd2"></div>
<div class="t " style="left:1158px;top:631.49px;font-size:13.6px;font-weight:400;color:#5e8ee0;-webkit-text-stroke:0.45px #5e8ee0;">Clear</div>
<div class="a" style="left:967px;top:665px;width:27px;height:27px;background:#fff;border:1px solid #dfe2e8;border-radius:9px"></div>
<svg class="a" style="left:972px;top:672px;" width="17" height="14" viewBox="0 0 17 14" fill="none"><rect x="0.5" y="1" width="4.5" height="12" rx="2" fill="#3f6fd8"/><rect x="6" y="1" width="4.5" height="12" rx="1" fill="#e9b73c"/><rect x="11.5" y="1" width="4.5" height="12" rx="2" fill="#e86a6a"/></svg>
<div class="a" style="left:1000px;top:665px;width:202px;height:28px;background:#d8f4e3;border-radius:11px"></div>
<div class="t " style="left:1008px;top:670.28px;font-size:15.5px;font-weight:400;color:#1c1f24;-webkit-text-stroke:0.45px #1c1f24;">Measure Values</div>
<svg class="a" style="left:1180px;top:676px;" width="12" height="8" viewBox="0 0 12 8" fill="none"><path d="M1.5 1.5l4.5 4.5 4.5-4.5" stroke="#1c1f24" stroke-width="1.3"/></svg>
<div class="t " style="left:969px;top:729.63px;font-size:15.8px;font-weight:400;color:#1c1f24;-webkit-text-stroke:0.45px #1c1f24;">Filters</div>
<div class="t " style="left:978px;top:768.90px;font-size:14.3px;font-weight:400;color:#6b7079;">Add fields here...</div>
<div class="t " style="left:994px;top:865.88px;font-size:15.5px;font-weight:400;color:#1c1f24;">Convert to Visual Explorer</div>
<div class="t " style="left:990px;top:919.93px;font-size:15.8px;font-weight:400;color:#1c1f24;">Update mode:</div>
<div class="t " style="left:1101px;top:919.67px;font-size:16.1px;font-weight:400;color:#1c1f24;">Automatic</div>
<svg class="a" style="left:1178px;top:924px;" width="12" height="8" viewBox="0 0 12 8" fill="none"><path d="M1.5 1.5l4.5 4.5 4.5-4.5" stroke="#1c1f24" stroke-width="1.3"/></svg>
<!--FIELDS-->
<div class="a" style="left:1215px;top:170.5px;width:289px;height:780px;background:#fdfdfc;border-left:1px solid #e0e3e9"></div>
<div class="t " style="left:1287px;top:190.58px;font-size:15.5px;font-weight:400;color:#1c1f24;-webkit-text-stroke:0.45px #1c1f24;">Fields</div>
<div class="t " style="left:1387px;top:190.58px;font-size:15.5px;font-weight:400;color:#5b6068;-webkit-text-stroke:0.45px #5b6068;">Format</div>
<div class="a" style="left:1216px;top:227px;width:288px;height:1px;background:#e3e5ea"></div>
<div class="a" style="left:1258px;top:225.5px;width:100px;height:2.5px;background:#1f55d6"></div>
<div class="a" style="left:1225px;top:239px;width:228px;height:30px;background:#fff;border:1px solid #d9dce2;border-radius:11px"></div>
<div class="t " style="left:1236px;top:246.88px;font-size:15.5px;font-weight:400;color:#5b6068;">Search fields...</div>
<svg class="a" style="left:1429px;top:243px;" width="24" height="22" viewBox="0 0 24 22" fill="none"><circle cx="10" cy="10" r="7.5" stroke="#3d4148" stroke-width="1.3"/><path d="M15.5 15.5l4.5 4.5" stroke="#3d4148" stroke-width="2"/></svg>
<div class="a" style="left:1464px;top:239px;width:30px;height:30px;background:#fff;border:1px solid #d9dce2;border-radius:9px"></div>
<svg class="a" style="left:1464px;top:239px" width="30" height="30" viewBox="1464 239 30 30" fill="none"><path d="M1470.2 259.6q1.9 1.3 2.9-1.4l2.7-8.2q.9-2.3 3.1-1.6" stroke="#2b2e34" stroke-width="1.2" stroke-linecap="round"/><path d="M1473.3 252.4h3.4" stroke="#2b2e34" stroke-width="1.1"/><path d="M1477.2 254.6l2.9 3.2M1480.1 254.6l-2.9 3.2" stroke="#55595f" stroke-width="1"/><path d="M1484.4 247.6v6.2M1481.3 250.7h6.2" stroke="#2357d8" stroke-width="1.7"/></svg>
<div class="t " style="left:1226px;top:289.68px;font-size:14.2px;font-weight:400;color:#1c1f24;">Dimensions</div>
<svg class="a" style="left:1242px;top:321.2px;" width="13" height="14" viewBox="0 0 13 14" fill="none"><path d="M1.5 3.5V1.5h10v2M6.5 1.5v11M4 12.5h5" stroke="#2f6ad9" stroke-width="1.5"/></svg>
<div class="t " style="left:1263px;top:321.10px;font-size:14.3px;font-weight:400;color:#1c1f24;">account_id</div>
<svg class="a" style="left:1242px;top:348.65px;" width="13" height="14" viewBox="0 0 13 14" fill="none"><path d="M1.5 3.5V1.5h10v2M6.5 1.5v11M4 12.5h5" stroke="#2f6ad9" stroke-width="1.5"/></svg>
<div class="t " style="left:1263px;top:348.55px;font-size:14.3px;font-weight:400;color:#1c1f24;">account_manager</div>
<svg class="a" style="left:1242px;top:376.09999999999997px;" width="13" height="14" viewBox="0 0 13 14" fill="none"><path d="M1.5 3.5V1.5h10v2M6.5 1.5v11M4 12.5h5" stroke="#2f6ad9" stroke-width="1.5"/></svg>
<div class="t " style="left:1263px;top:376.00px;font-size:14.3px;font-weight:400;color:#1c1f24;">account_name</div>
<svg class="a" style="left:1241px;top:404.04999999999995px;" width="14" height="14" viewBox="0 0 14 14" fill="none"><rect x="1" y="2" width="12" height="11" rx="2.5" stroke="#2f6ad9" stroke-width="1.2"/><path d="M1 5.5h12" stroke="#2f6ad9" stroke-width="1.2"/><path d="M4 0.5v2.5M10 0.5v2.5" stroke="#2f6ad9" stroke-width="1.1"/><g fill="#2f6ad9"><rect x="3.5" y="7.3" width="1.4" height="1.3"/><rect x="6.3" y="7.3" width="1.4" height="1.3"/><rect x="9.1" y="7.3" width="1.4" height="1.3"/><rect x="3.5" y="9.8" width="1.4" height="1.3"/><rect x="6.3" y="9.8" width="1.4" height="1.3"/><rect x="9.1" y="9.8" width="1.4" height="1.3"/></g></svg>
<div class="t " style="left:1263px;top:403.45px;font-size:14.3px;font-weight:400;color:#1c1f24;">cancelled_at</div>
<svg class="a" style="left:1242px;top:431.0px;" width="13" height="14" viewBox="0 0 13 14" fill="none"><path d="M1.5 3.5V1.5h10v2M6.5 1.5v11M4 12.5h5" stroke="#2f6ad9" stroke-width="1.5"/></svg>
<div class="t " style="left:1263px;top:430.90px;font-size:14.3px;font-weight:400;color:#1c1f24;">order_id</div>
<svg class="a" style="left:1242px;top:458.45px;" width="13" height="14" viewBox="0 0 13 14" fill="none"><path d="M1.5 3.5V1.5h10v2M6.5 1.5v11M4 12.5h5" stroke="#2f6ad9" stroke-width="1.5"/></svg>
<div class="t " style="left:1263px;top:458.35px;font-size:14.3px;font-weight:400;color:#1c1f24;">payment_cycle</div>
<svg class="a" style="left:1242px;top:485.9px;" width="13" height="14" viewBox="0 0 13 14" fill="none"><path d="M1.5 3.5V1.5h10v2M6.5 1.5v11M4 12.5h5" stroke="#2f6ad9" stroke-width="1.5"/></svg>
<div class="t " style="left:1263px;top:485.80px;font-size:14.3px;font-weight:400;color:#1c1f24;">product_id</div>
<svg class="a" style="left:1242px;top:513.35px;" width="13" height="14" viewBox="0 0 13 14" fill="none"><path d="M1.5 3.5V1.5h10v2M6.5 1.5v11M4 12.5h5" stroke="#2f6ad9" stroke-width="1.5"/></svg>
<div class="t " style="left:1263px;top:513.25px;font-size:14.3px;font-weight:400;color:#1c1f24;">product_name</div>
<svg class="a" style="left:1241px;top:541.3px;" width="14" height="14" viewBox="0 0 14 14" fill="none"><rect x="1" y="2" width="12" height="11" rx="2.5" stroke="#2f6ad9" stroke-width="1.2"/><path d="M1 5.5h12" stroke="#2f6ad9" stroke-width="1.2"/><path d="M4 0.5v2.5M10 0.5v2.5" stroke="#2f6ad9" stroke-width="1.1"/><g fill="#2f6ad9"><rect x="3.5" y="7.3" width="1.4" height="1.3"/><rect x="6.3" y="7.3" width="1.4" height="1.3"/><rect x="9.1" y="7.3" width="1.4" height="1.3"/><rect x="3.5" y="9.8" width="1.4" height="1.3"/><rect x="6.3" y="9.8" width="1.4" height="1.3"/><rect x="9.1" y="9.8" width="1.4" height="1.3"/></g></svg>
<div class="t " style="left:1263px;top:540.70px;font-size:14.3px;font-weight:400;color:#1c1f24;">purchased_at</div>
<svg class="a" style="left:1242px;top:568.25px;" width="13" height="14" viewBox="0 0 13 14" fill="none"><path d="M1.5 3.5V1.5h10v2M6.5 1.5v11M4 12.5h5" stroke="#2f6ad9" stroke-width="1.5"/></svg>
<div class="t " style="left:1263px;top:568.15px;font-size:14.3px;font-weight:400;color:#1c1f24;">returned_at</div>
<svg class="a" style="left:1242px;top:595.7px;" width="13" height="14" viewBox="0 0 13 14" fill="none"><path d="M1.5 3.5V1.5h10v2M6.5 1.5v11M4 12.5h5" stroke="#2f6ad9" stroke-width="1.5"/></svg>
<div class="t " style="left:1263px;top:595.60px;font-size:14.3px;font-weight:400;color:#1c1f24;">review</div>
<div class="a" style="left:1216px;top:610px;width:288px;height:340px;background:#fdfdfc;border-top:1px solid #e0e3e8"></div>
<div class="t " style="left:1226px;top:630.98px;font-size:14.2px;font-weight:400;color:#1c1f24;">Measures</div>
<svg class="a" style="left:1241px;top:662.1px;" width="13" height="14" viewBox="0 0 13 14" fill="none"><path d="M4.5 1v12M8.5 1v12M1 4.5h11M1 9h11" stroke="#3aa864" stroke-width="1.15"/></svg>
<div class="t " style="left:1263px;top:661.50px;font-size:14.3px;font-weight:400;color:#1c1f24;">business_size</div>
<svg class="a" style="left:1241px;top:689.5500000000001px;" width="13" height="14" viewBox="0 0 13 14" fill="none"><path d="M4.5 1v12M8.5 1v12M1 4.5h11M1 9h11" stroke="#3aa864" stroke-width="1.15"/></svg>
<div class="t " style="left:1263px;top:688.95px;font-size:14.3px;font-weight:400;color:#1c1f24;">days_to_close</div>
<svg class="a" style="left:1241px;top:717.0px;" width="13" height="14" viewBox="0 0 13 14" fill="none"><path d="M4.5 1v12M8.5 1v12M1 4.5h11M1 9h11" stroke="#3aa864" stroke-width="1.15"/></svg>
<div class="t " style="left:1263px;top:716.40px;font-size:14.3px;font-weight:400;color:#1c1f24;">days_to_ship</div>
<svg class="a" style="left:1241px;top:744.45px;" width="13" height="14" viewBox="0 0 13 14" fill="none"><path d="M4.5 1v12M8.5 1v12M1 4.5h11M1 9h11" stroke="#3aa864" stroke-width="1.15"/></svg>
<div class="t " style="left:1263px;top:743.85px;font-size:14.3px;font-weight:400;color:#1c1f24;">discount</div>
<svg class="a" style="left:1241px;top:771.9px;" width="13" height="14" viewBox="0 0 13 14" fill="none"><path d="M4.5 1v12M8.5 1v12M1 4.5h11M1 9h11" stroke="#3aa864" stroke-width="1.15"/></svg>
<div class="t " style="left:1263px;top:771.30px;font-size:14.3px;font-weight:400;color:#1c1f24;">index</div>
<svg class="a" style="left:1241px;top:799.35px;" width="13" height="14" viewBox="0 0 13 14" fill="none"><path d="M4.5 1v12M8.5 1v12M1 4.5h11M1 9h11" stroke="#3aa864" stroke-width="1.15"/></svg>
<div class="t " style="left:1263px;top:798.75px;font-size:14.3px;font-weight:400;color:#1c1f24;">price</div>
<svg class="a" style="left:1241px;top:826.8px;" width="13" height="14" viewBox="0 0 13 14" fill="none"><path d="M4.5 1v12M8.5 1v12M1 4.5h11M1 9h11" stroke="#3aa864" stroke-width="1.15"/></svg>
<div class="t " style="left:1263px;top:826.20px;font-size:14.3px;font-weight:400;color:#1c1f24;">quantity</div>
<svg class="a" style="left:1241px;top:854.25px;" width="13" height="14" viewBox="0 0 13 14" fill="none"><path d="M4.5 1v12M8.5 1v12M1 4.5h11M1 9h11" stroke="#3aa864" stroke-width="1.15"/></svg>
<div class="t " style="left:1263px;top:853.65px;font-size:14.3px;font-weight:400;color:#1c1f24;">rating</div>
<svg class="a" style="left:1241px;top:881.7px;" width="13" height="14" viewBox="0 0 13 14" fill="none"><path d="M4.5 1v12M8.5 1v12M1 4.5h11M1 9h11" stroke="#3aa864" stroke-width="1.15"/></svg>
<div class="t " style="left:1263px;top:881.10px;font-size:14.3px;font-weight:400;color:#1c1f24;">shipping_cost</div>
<svg class="a" style="left:1241px;top:909.15px;" width="13" height="14" viewBox="0 0 13 14" fill="none"><path d="M4.5 1v12M8.5 1v12M1 4.5h11M1 9h11" stroke="#3aa864" stroke-width="1.15"/></svg>
<div class="t " style="left:1263px;top:908.55px;font-size:14.3px;font-weight:400;color:#1c1f24;">shipping_latitude</div>
<svg class="a" style="left:1241px;top:936.6px;" width="13" height="14" viewBox="0 0 13 14" fill="none"><path d="M4.5 1v12M8.5 1v12M1 4.5h11M1 9h11" stroke="#3aa864" stroke-width="1.15"/></svg>
<div class="t " style="left:1263px;top:936.00px;font-size:14.3px;font-weight:400;color:#1c1f24;">shipping_longitude</div>
<div class="a" style="left:1420px;top:865px;width:59px;height:59px;background:#050505;border-radius:50%;box-shadow:0 2px 26px rgba(0,0,0,.13)"></div>
<svg class="a" style="left:1420px;top:865px" width="59" height="59" viewBox="1420 865 59 59" fill="none"><path d="M1439 880h20.5a3 3 0 0 1 3 3v27l-7.5-3.2H1439a3 3 0 0 1-3-3V883a3 3 0 0 1 3-3z" fill="#fff"/><path d="M1440.5 899.5q8.8 5.2 17.5 0" stroke="#050505" stroke-width="1.7" stroke-linecap="round"/></svg>
<svg class="a" style="left:1494px;top:940px;" width="10" height="10" viewBox="0 0 10 10" fill="none"><path d="M10 0 Q10 10 0 10 L10 10z" fill="#777"/></svg>
</body></html>
